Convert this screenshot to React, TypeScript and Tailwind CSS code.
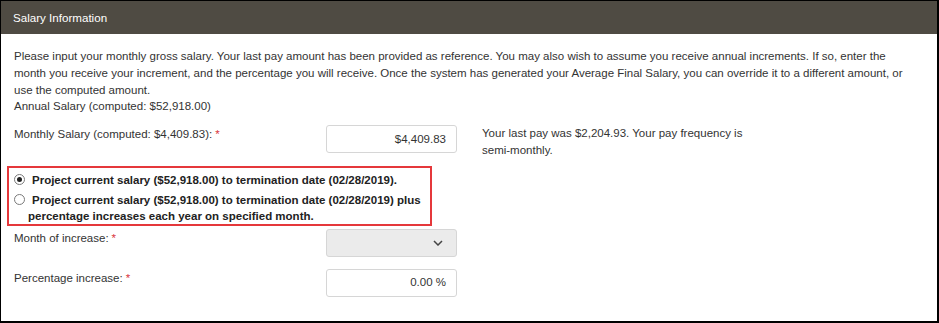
import React from 'react'

const font = { fontFamily: '"Liberation Sans", Arial, sans-serif' }

function Req() {
  return <span className="text-[#d9363e] ml-[3px]">*</span>
}

function Radio({ checked }: { checked?: boolean }) {
  return (
    <span className="mt-[2px] flex h-[11px] w-[11px] shrink-0 items-center justify-center rounded-full border border-[#7a7a7a] bg-white">
      {checked && <span className="h-[5px] w-[5px] rounded-full bg-[#222]" />}
    </span>
  )
}

export default function App() {
  return (
    <div className="h-[323px] w-[939px] bg-white" style={font}>
      <div className="h-full w-full border border-black border-r-2 border-b-2 text-[11.5px] text-[#333]">
        <div className="flex h-[33px] items-center bg-[#4f4b43] px-[12px] text-[11.6px] text-white">
          Salary Information
        </div>

        <div className="pl-[13px] pr-[24px] pt-[14px] leading-[17px]">
          <div className="whitespace-nowrap">
            <div>
              Please input your monthly gross salary. Your last pay amount has been provided as reference. You may also
              wish to assume you receive annual increments. If so, enter the
            </div>
            <div>
              month you receive your increment, and the percentage you will receive. Once the system has generated your
              Average Final Salary, you can override it to a different amount, or
            </div>
            <div>use the computed amount.</div>
            <div className="leading-[14px]">Annual Salary (computed: $52,918.00)</div>
          </div>

          <div className="mt-[12px] flex items-start">
            <div className="w-[312px] pt-[1px]">
              Monthly Salary (computed: $4,409.83):<Req />
            </div>
            <div className="flex h-[28px] w-[131px] items-center justify-end rounded-[3px] border border-[#d6d6d6] px-[10px]">
              $4,409.83
            </div>
            <div className="ml-[25px] whitespace-nowrap">
              Your last pay was $2,204.93. Your pay frequency is
              <br />
              semi-monthly.
            </div>
          </div>
        </div>

        <div className="ml-[6px] mt-[7px] w-[425px] border-2 border-[#e5383b] px-[5px] pt-[4px] font-bold leading-[16px] text-[#222]">
          <div className="flex items-start gap-[7px]">
            <Radio checked />
            <span>Project current salary ($52,918.00) to termination date (02/28/2019).</span>
          </div>
          <div className="mt-[4px] flex items-start gap-[7px]">
            <Radio />
            <span className="whitespace-nowrap">
              Project current salary ($52,918.00) to termination date (02/28/2019) plus
            </span>
          </div>
          <div className="ml-[14px] whitespace-nowrap">percentage increases each year on specified month.</div>
        </div>

        <div className="pl-[13px]">
          <div className="mt-[3px] flex items-start">
            <div className="w-[312px] pt-[1px] leading-[17px]">
              Month of increase:<Req />
            </div>
            <div className="flex h-[28px] w-[131px] items-center justify-end rounded-[3px] border border-[#d6d6d6] bg-[#ebebeb] pr-[13px]">
              <svg width="10" height="6" viewBox="0 0 10 6" fill="none">
                <path d="M1 1l4 4 4-4" stroke="#444" strokeWidth="1.5" />
              </svg>
            </div>
          </div>
          <div className="mt-[12px] flex items-start">
            <div className="w-[312px] pt-[1px] leading-[17px]">
              Percentage increase:<Req />
            </div>
            <div className="flex h-[28px] w-[131px] items-center justify-end rounded-[3px] border border-[#d6d6d6] px-[10px]">
              0.00 %
            </div>
          </div>
        </div>
      </div>
    </div>
  )
}
